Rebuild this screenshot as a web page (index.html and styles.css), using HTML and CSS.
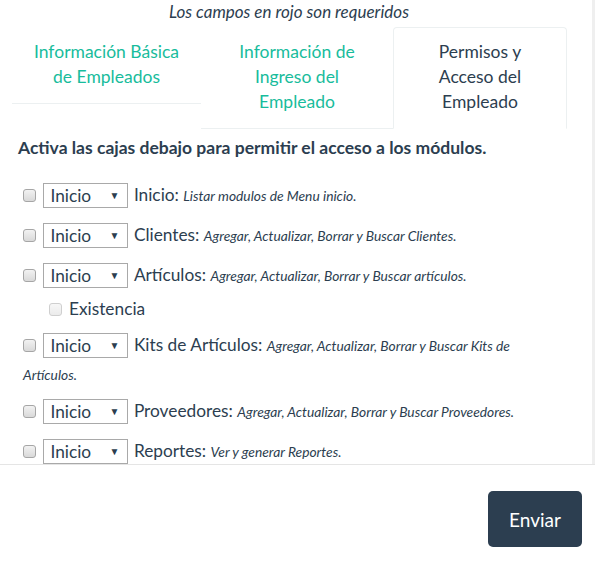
FILE: index.html
```html
<!DOCTYPE html>
<html lang="es">
<head>
<meta charset="utf-8">
<title>Permisos</title>
<link rel="stylesheet" href="styles.css">
</head>
<body>
<div class="modal">
  <div class="modal-body">
    <p class="required-note">Los campos en rojo son requeridos</p>
    <ul class="tabs">
      <li class="tab tab-1"><a href="#">Información Básica de Empleados</a></li>
      <li class="tab tab-2"><a href="#">Información de Ingreso del Empleado</a></li>
      <li class="tab tab-3 active"><a href="#">Permisos y Acceso del Empleado</a></li>
    </ul>
    <h4 class="perm-title">Activa las cajas debajo para permitir el acceso a los módulos.</h4>
    <div class="perm">
      <span class="cb"></span>
      <span class="sel"><span class="sel-val">Inicio</span><span class="caret">▼</span></span>
      <span class="mod">Inicio:</span> <span class="desc">Listar modulos de Menu inicio.</span>
    </div>
    <div class="perm">
      <span class="cb"></span>
      <span class="sel"><span class="sel-val">Inicio</span><span class="caret">▼</span></span>
      <span class="mod">Clientes:</span> <span class="desc">Agregar, Actualizar, Borrar y Buscar Clientes.</span>
    </div>
    <div class="perm">
      <span class="cb"></span>
      <span class="sel"><span class="sel-val">Inicio</span><span class="caret">▼</span></span>
      <span class="mod">Artículos:</span> <span class="desc">Agregar, Actualizar, Borrar y Buscar artículos.</span>
      <div class="sub"><span class="cb cb-light"></span><span class="sub-label">Existencia</span></div>
    </div>
    <div class="perm perm-wrap">
      <span class="cb"></span>
      <span class="sel"><span class="sel-val">Inicio</span><span class="caret">▼</span></span>
      <span class="mod">Kits de Artículos:</span> <span class="desc">Agregar, Actualizar, Borrar y Buscar Kits de Artículos.</span>
    </div>
    <div class="perm">
      <span class="cb"></span>
      <span class="sel"><span class="sel-val">Inicio</span><span class="caret">▼</span></span>
      <span class="mod">Proveedores:</span> <span class="desc">Agregar, Actualizar, Borrar y Buscar Proveedores.</span>
    </div>
    <div class="perm">
      <span class="cb"></span>
      <span class="sel"><span class="sel-val">Inicio</span><span class="caret">▼</span></span>
      <span class="mod">Reportes:</span> <span class="desc">Ver y generar Reportes.</span>
    </div>
  </div>
  <div class="modal-footer">
    <button class="btn-primary" type="button">Enviar</button>
  </div>
</div>
</body>
</html>
```
FILE: styles.css
```css
* { box-sizing: border-box; }
html, body { margin: 0; padding: 0; background: #fff; }
body {
  font-family: Lato, "Open Sans", "Liberation Sans", sans-serif;
  color: #2c3e50;
  font-size: 15px;
  width: 595px;
  height: 567px;
  overflow: hidden;
}
.modal-body {
  height: 464px;
  overflow: hidden;
  border-right: 3px solid #efefef;
}
.required-note {
  margin: 0;
  padding: 1px 14px 0 0;
  height: 27px;
  text-align: center;
  font-style: italic;
  font-size: 17px;
  line-height: 21px;
}
.tabs {
  list-style: none;
  margin: 0 0 0 12px;
  padding: 0;
  display: flex;
  align-items: flex-start;
}
.tab a {
  display: block;
  padding: 12px 20px 14px;
  font-size: 17.5px;
  line-height: 25px;
  text-align: center;
  text-decoration: none;
  color: #18bc9c;
  border-bottom: 1px solid #ecf0f1;
}
.tab-1 { width: 189px; }
.tab-2 { width: 192px; }
.tab-3 { width: 174px; }
.tab.active a {
  color: #2c3e50;
  border: 1px solid #ecf0f1;
  border-bottom-color: transparent;
  border-radius: 4px 4px 0 0;
  padding-top: 11px;
}
.perm-title {
  margin: 7px 0 21px 18px;
  font-size: 17.5px;
  font-weight: 700;
  line-height: 24px;
}
.perm {
  margin: 0 30px 11px 23px;
  line-height: 28px;
  font-size: 17.3px;
}
.perm-wrap { margin-bottom: 8px; }
.cb {
  display: inline-block;
  width: 13px;
  height: 13px;
  border: 1px solid #a6a6a6;
  border-radius: 3px;
  background: linear-gradient(#f2f2f2, #d9d9d9);
  vertical-align: middle;
  margin: -3px 3px 0 0;
}
.cb-light {
  border-color: #cfcfcf;
  background: linear-gradient(#f7f7f7, #ebebeb);
}
.sel {
  display: inline-flex;
  align-items: center;
  justify-content: space-between;
  vertical-align: middle;
  margin-top: -3px;
  width: 85px;
  height: 25px;
  border: 1px solid #a9a9a9;
  background: #fff;
  padding: 0 8px 0 6px;
  line-height: 23px;
}
.caret {
  font-size: 10px;
  line-height: 23px;
}
.mod { margin-left: 1px; }
.desc {
  font-style: italic;
  font-size: 13.8px;
}
.sub {
  margin: 8px 0 4px 26px;
  line-height: 22px;
}
.sub .cb { margin-right: 7px; }
.modal-footer {
  border-top: 1px solid #e5e5e5;
  display: flex;
  justify-content: flex-end;
  padding: 26px 13px 0 0;
}
.btn-primary {
  width: 94px;
  height: 56px;
  background: #2c3e50;
  color: #fff;
  border: none;
  border-radius: 5px;
  font-family: inherit;
  font-size: 19px;
}
```
